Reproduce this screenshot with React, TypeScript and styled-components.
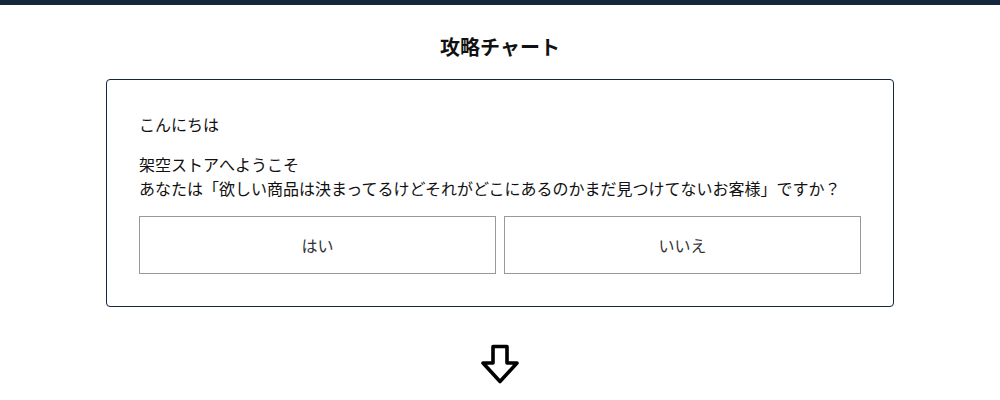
import React from 'react';
import styled, { createGlobalStyle } from 'styled-components';

const GlobalStyle = createGlobalStyle`
  html, body {
    margin: 0;
    padding: 0;
    background: #fff;
  }
  body {
    font-family: "Noto Sans CJK JP", "Noto Sans", sans-serif;
    color: #111;
  }
`;

const TopBar = styled.div`
  height: 5px;
  background-color: #14253d;
`;

const Main = styled.main`
  display: flex;
  flex-direction: column;
  align-items: center;
  padding-top: 27px;
`;

const Title = styled.h1`
  margin: 0 0 17px;
  font-size: 20px;
  line-height: 30px;
  font-weight: 700;
  color: #111;
`;

const Card = styled.section`
  box-sizing: border-box;
  width: 788px;
  border: 1px solid #14253d;
  border-radius: 4px;
  padding: 32px;
`;

const Message = styled.p`
  margin: 0 0 16px;
  font-size: 16px;
  line-height: 24px;
`;

const Choices = styled.div`
  display: grid;
  grid-template-columns: 1fr 1fr;
  gap: 8px;
  margin-top: 1px;
`;

const Choice = styled.button`
  height: 58px;
  background: #fff;
  border: 1px solid #999;
  border-radius: 0;
  font-family: inherit;
  font-size: 16px;
  color: #333;
  cursor: pointer;
`;

const Next = styled.div`
  display: flex;
  justify-content: center;
  margin-top: 36px;
`;

// 下向きの太い矢印
const DownArrow = () => (
  <svg width="40" height="42" viewBox="0 0 40 42" fill="none">
    <path
      d="M13 3.5H27V20H37L20 38.5L3 20H13Z"
      stroke="#000"
      strokeWidth="3.6"
      strokeLinejoin="round"
    />
  </svg>
);

export default function App() {
  return (
    <>
      <GlobalStyle />
      <TopBar />
      <Main>
        <Title>攻略チャート</Title>
        <Card>
          <Message>こんにちは</Message>
          <Message>
            架空ストアへようこそ
            <br />
            あなたは「欲しい商品は決まってるけどそれがどこにあるのかまだ見つけてないお客様」ですか？
          </Message>
          <Choices>
            <Choice type="button">はい</Choice>
            <Choice type="button">いいえ</Choice>
          </Choices>
        </Card>
        <Next>
          <DownArrow />
        </Next>
      </Main>
    </>
  );
}
